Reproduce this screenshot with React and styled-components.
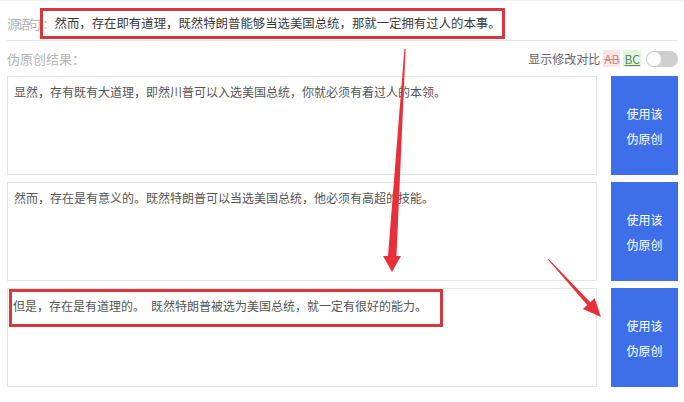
import React from "react";
import styled, { createGlobalStyle } from "styled-components";

const GlobalStyle = createGlobalStyle`
  body {
    margin: 0;
    background: #fff;
    font-family: "Noto Sans CJK SC", "Noto Sans", sans-serif;
  }
`;

const Page = styled.div`
  position: relative;
  width: 684px;
  height: 402px;
  box-sizing: border-box;
  padding: 0 6px 0 7px;
  border-top: 1px solid #eeeeee;
  overflow: hidden;
`;

const SourceRow = styled.div`
  display: flex;
  align-items: center;
  height: 40px;
  padding-top: 5px;
  box-sizing: border-box;
  border-bottom: 1px solid #e6e6e6;
`;

const Label = styled.span`
  font-size: 13px;
  letter-spacing: ${props => (props.$tight ? "-2.5px" : "0")};
  color: #b4b4b4;
`;

const Highlight = styled.span`
  display: inline-flex;
  align-items: center;
  height: 31px;
  box-sizing: border-box;
  border: 3px solid #d7383e;
  padding: 0 1px 0 0;
  margin-left: 1px;
`;

const Colon = styled.span`
  color: #b4b4b4;
  font-size: 12px;
`;

const SourceText = styled.span`
  font-size: 12.4px;
  color: #3a3a3a;
`;

const ResultHead = styled.div`
  display: flex;
  align-items: center;
  justify-content: space-between;
  height: 35px;
`;

const DiffToggle = styled.div`
  display: flex;
  align-items: center;
  font-size: 12px;
  color: #666;
  gap: 3px;
`;

const Mark = styled.span`
  padding: 0 1px;
  background: ${props => (props.$del ? "#fbe4e4" : "#e4f2e2")};
  color: ${props => (props.$del ? "#c98c8c" : "#5c8a5c")};
  text-decoration: ${props => (props.$del ? "line-through" : "underline")};
`;

const Switch = styled.span`
  position: relative;
  display: inline-block;
  width: 32px;
  height: 16px;
  border-radius: 8px;
  background: #cfcfcf;
  margin-left: 2px;
  &::after {
    content: "";
    position: absolute;
    left: 1px;
    top: 1px;
    width: 14px;
    height: 14px;
    border-radius: 50%;
    background: #fff;
  }
`;

const List = styled.div`
  display: flex;
  flex-direction: column;
  gap: 7px;
`;

const Row = styled.div`
  display: flex;
  gap: 14px;
  height: 99px;
`;

const Box = styled.div`
  flex: 1;
  box-sizing: border-box;
  border: 1px solid #e3e3e3;
  padding: 6px 6px;
  font-size: 12px;
  line-height: 18px;
  color: #555;
`;

const BoxMark = styled.span`
  display: inline-block;
  border: 3px solid #d7383e;
  padding: 5px 13px 9px 1px;
  margin: -6px 0 0 -5px;
  line-height: 18px;
`;

const UseButton = styled.button`
  width: 67px;
  border: none;
  background: #3f6fe8;
  color: #fff;
  font-family: inherit;
  font-size: 12px;
  line-height: 25px;
  padding: 0;
  cursor: pointer;
`;

const Arrows = styled.svg`
  position: absolute;
  left: 0;
  top: 0;
  pointer-events: none;
`;

const results = [
  "显然，存有既有大道理，即然川普可以入选美国总统，你就必须有着过人的本领。",
  "然而，存在是有意义的。既然特朗普可以当选美国总统，他必须有高超的技能。",
  "但是，存在是有道理的。\u3000既然特朗普被选为美国总统，就一定有很好的能力。",
];

export default function App() {
  return (
    <>
      <GlobalStyle />
      <Page>
        <SourceRow>
          <Label $tight>源语句</Label>
          <Highlight>
            <Colon>：</Colon>
            <SourceText>然而，存在即有道理，既然特朗普能够当选美国总统，那就一定拥有过人的本事。</SourceText>
          </Highlight>
        </SourceRow>
        <ResultHead>
          <Label>伪原创结果：</Label>
          <DiffToggle>
            <span>显示修改对比</span>
            <Mark $del>AB</Mark>
            <Mark>BC</Mark>
            <Switch />
          </DiffToggle>
        </ResultHead>
        <List>
          {results.map((text, i) => (
            <Row key={i}>
              <Box>{i === 2 ? <BoxMark>{text}</BoxMark> : text}</Box>
              <UseButton>
                使用该
                <br />
                伪原创
              </UseButton>
            </Row>
          ))}
        </List>
        <Arrows width="684" height="402" viewBox="0 0 684 402">
          <polygon
            fill="#e8303a"
            points="404.4,48 405.6,48 396.5,255 401,255 392,271 383,255 388,255"
          />
          <polygon
            fill="#e8303a"
            points="547.6,258.3 587.3,304.1 582.9,308.1 601,316 594.7,297.3 590.3,301.3 548.4,257.7"
          />
        </Arrows>
      </Page>
    </>
  );
}
